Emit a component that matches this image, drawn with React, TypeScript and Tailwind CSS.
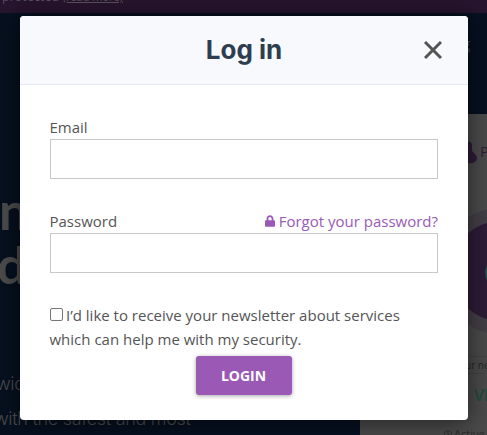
import React from 'react';
import { FaLock, FaRegClock } from 'react-icons/fa';

const Backdrop: React.FC = () => {
  return (
    <div className="h-full flex flex-col overflow-hidden bg-[#06101f] whitespace-nowrap">
      {/* Notice */}
      <div className="h-[13px] shrink-0 bg-[#27142e] text-[#5a525d] flex items-end pl-[2px] pb-[9px] font-['Open_Sans',sans-serif] text-[12px] leading-[15px]">
        <span className="tracking-[0.3px]">protected&nbsp;</span>
        <span className="text-[11px] underline">(read more)</span>
      </div>

      {/* Nav */}
      <nav className="h-[101px] shrink-0 flex justify-end pt-[20px] pr-[17px] text-[#4c4c4c] font-['Open_Sans',sans-serif] text-[14px]">
        <span>Blog</span>
      </nav>

      <div className="flex-1 flex justify-between min-h-0">
        {/* Hero */}
        <div className="w-[300px] pt-[69px] text-[#4c4c4c] font-['Lato',sans-serif]">
          <h1 className="text-[52px] leading-[54px] font-bold -ml-px">
            n<br />
            <span className="-ml-[2px]">d</span>
          </h1>
          <p className="mt-[75px] -ml-[4px] text-[18px] leading-[35px] font-['Inter',sans-serif] font-light tracking-[-0.3px]">
            wide<br />
            <span className="-ml-[2px]">with the safest and most</span>
          </p>
        </div>

        {/* Product card */}
        <div className="w-[127px] bg-[#4a4a4a] pt-[27px] flex flex-col items-end overflow-hidden font-['Open_Sans',sans-serif]">
          <div className="h-[21px] shrink-0 flex items-center gap-[3px] text-[#2e1e35]">
            <svg className="w-[18px] h-[24px]" viewBox="0 0 18 24">
              <path d="M9 2c3-1 4 1 4 4v4c0 3 5 4 5 8 0 7-14 7-14 0 0-4 5-5 5-8z" fill="#2e1b37" />
            </svg>
            <span className="w-[7px] text-[15px] leading-[21px]">P</span>
          </div>
          <svg className="w-[55px] h-[140px] mt-[42px] shrink-0" viewBox="0 0 55 140">
            <circle cx="69" cy="67" r="63" fill="#433e46" />
            <circle cx="69" cy="67" r="50" fill="#2e1b37" />
            <circle cx="69" cy="69" r="16" fill="#1f514b" />
          </svg>
          <div className="w-full h-[18px] shrink-0 mt-[12px] pl-[94px] border-y border-[#424242] text-[10px] leading-[16px] text-[#242424]">
            your new
          </div>
          <div className="w-[13px] shrink-0 mt-[10px] text-[16px] leading-[22px] font-semibold text-[#1e4c3c]">VE</div>
          <div className="w-full shrink-0 mt-[20px] pl-[84px] flex items-center gap-[2px] text-[11px] leading-[15px] text-[#2b2b2b]">
            <FaRegClock className="w-[8px] h-[8px] shrink-0" />
            <span>Active Time</span>
          </div>
        </div>
      </div>
    </div>
  );
};

const LoginModal: React.FC = () => {
  return (
    <div className="absolute inset-0 flex items-start justify-center pt-4 pl-px">
      <div className="w-[448px] h-[404px] rounded bg-white overflow-hidden shadow-[0_2px_24px_rgba(0,0,0,0.55)] font-['Open_Sans',sans-serif] text-[15px] text-[#555]">
        <header className="relative h-[69px] flex items-center justify-center bg-[#f8f9fd] border-b border-[#e6e7f2]">
          <h2 className="font-['Inter',sans-serif] text-[26px] leading-none font-bold text-[#2c3e50]">Log in</h2>
          <button type="button" aria-label="Close" className="absolute right-[26px] top-[25px]">
            <svg className="w-[18px] h-[18px]" viewBox="0 0 18 18" stroke="#555" strokeWidth="3">
              <path d="M1 1l16 16M17 1L1 17" />
            </svg>
          </button>
        </header>

        <form className="px-[30px] pt-[30px]">
          <label className="block h-6 leading-[24px] -ml-[0.5px]" htmlFor="email">Email</label>
          <input id="email" type="email" className="block w-full h-10 border border-[#c8c8c8] px-3 outline-none" />

          <div className="mt-[30px] h-6 leading-[24px] flex justify-between -ml-[0.5px]">
            <label htmlFor="password">Password</label>
            <a className="flex items-center gap-1 text-[#9b59b6]">
              <FaLock className="w-[10px] h-[12px]" />
              Forgot your password?
            </a>
          </div>
          <input id="password" type="password" className="block w-full h-10 border border-[#c8c8c8] px-3 outline-none" />

          <label className="block mt-[30px] leading-[24px] -ml-[0.5px]">
            <input type="checkbox" className="appearance-none inline-block w-[13px] h-[13px] mr-[3.5px] rounded-[2px] border border-[#767676] bg-white align-[0px]" />
            I’d like to receive your newsletter about services
            <br />
            which can help me with my security.
          </label>

          <div className="flex justify-center mt-[5px]">
            <button type="button" className="w-24 h-[39px] pr-px rounded-[3px] bg-[#9b59b6] text-white text-[14px] font-bold shadow-[0_1px_4px_rgba(0,0,0,0.35)]">
              LOGIN
            </button>
          </div>
        </form>
      </div>
    </div>
  );
};

const App: React.FC = () => {
  return (
    <div className="relative h-[435px] w-[487px] overflow-hidden">
      <Backdrop />
      <LoginModal />
    </div>
  );
};

export default App;
